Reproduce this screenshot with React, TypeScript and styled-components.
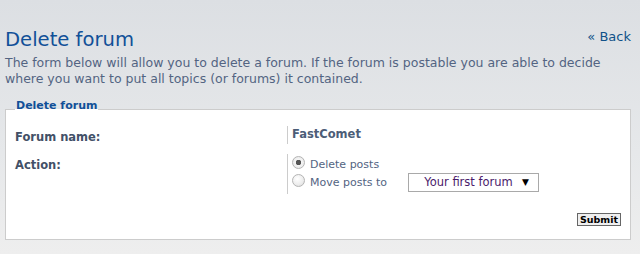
import React from "react";
import styled, { createGlobalStyle } from "styled-components";

const GlobalStyle = createGlobalStyle`
  html, body {
    margin: 0;
    padding: 0;
  }
  body {
    width: 640px;
    height: 254px;
    overflow: hidden;
    background: linear-gradient(to bottom, #dcdfe3 0%, #e6e8ea 60%, #eeeeee 100%);
    font-family: "DejaVu Sans", Verdana, sans-serif;
  }
`;

const Page = styled.div`
  padding: 0 9px 0 5px;
`;

const Header = styled.div`
  display: flex;
  justify-content: space-between;
  align-items: flex-start;
  padding-top: 27px;
`;

const Title = styled.h1`
  margin: 0;
  font-size: 19.6px;
  font-weight: normal;
  line-height: 26px;
  color: #115098;
`;

const BackLink = styled.a`
  margin-top: 2px;
  font-size: 13px;
  color: #105289;
  text-decoration: none;
`;

const Description = styled.p`
  margin: 2px 0 0;
  font-size: 12.5px;
  line-height: 16px;
  color: #536482;
`;

const Fieldset = styled.fieldset`
  margin: 12px 0 0;
  padding: 0 9px 13px 9px;
  background: #ffffff;
  border: 1px solid #cccccc;
  min-width: 0;
`;

const Legend = styled.legend`
  padding: 0 1px 6px;
  margin-left: 0;
  font-size: 11px;
  font-weight: bold;
  line-height: 14px;
  color: #115098;
`;

const Row = styled.div<{ $gap: number }>`
  display: grid;
  grid-template-columns: 272px 1fr;
  margin-top: ${({ $gap }) => $gap}px;
`;

const Label = styled.div`
  font-size: 11.5px;
  font-weight: bold;
  color: #425067;
  padding-top: 4px;
`;

const Value = styled.div<{ $pad?: string }>`
  border-left: 1px solid #cccccc;
  padding: ${({ $pad }) => $pad || "0"};
  padding-left: 4px;
  font-size: 11px;
  color: #333333;
`;

const Strong = styled.div`
  font-size: 11.5px;
  font-weight: bold;
  color: #4c5d77;
  line-height: 17px;
`;

const Option = styled.label`
  display: flex;
  align-items: center;
  height: 18px;
  color: #536482;
`;

const Radio = styled.input`
  appearance: none;
  width: 13px;
  height: 13px;
  margin: 0 5px 0 0;
  border: 1px solid #b4b4b4;
  border-radius: 50%;
  background: radial-gradient(circle at 40% 35%, #ffffff 0%, #ececec 60%, #d6d6d6 100%);
  position: relative;
  top: -2px;

  &:checked {
    background: radial-gradient(circle, #555555 0 2.5px, #f4f4f4 3px, #e4e4e4 100%);
  }
`;

const OptionText = styled.span`
  width: 92px;
`;

const SelectBox = styled.div`
  display: flex;
  align-items: center;
  width: 129px;
  height: 17px;
  border: 1px solid #a9a9a9;
  background: #ffffff;
  margin-left: 6px;
  font-size: 11.5px;
  color: #4b1b6b;
`;

const SelectText = styled.span`
  flex: 1;
  text-align: center;
  padding-left: 6px;
`;

const Arrow = styled.span`
  font-size: 9px;
  color: #000000;
  width: 16px;
`;

const Actions = styled.div`
  display: flex;
  justify-content: flex-end;
  margin-top: 19px;
`;

const Submit = styled.button`
  font-family: "DejaVu Sans", Verdana, sans-serif;
  font-size: 9.5px;
  font-weight: bold;
  color: #000000;
  background: #efefef;
  border: 1px solid #666666;
  padding: 0 2px;
  height: 13px;
  line-height: 11px;
`;

export default function App() {
  return (
    <>
      <GlobalStyle />
      <Page>
        <Header>
          <Title>Delete forum</Title>
          <BackLink href="#">« Back</BackLink>
        </Header>
        <Description>
          The form below will allow you to delete a forum. If the forum is postable you are able to decide
          where you want to put all topics (or forums) it contained.
        </Description>
        <Fieldset>
          <Legend>Delete forum</Legend>
          <Row $gap={7}>
            <Label>Forum name:</Label>
            <Value>
              <Strong>FastComet</Strong>
            </Value>
          </Row>
          <Row $gap={10}>
            <Label>Action:</Label>
            <Value $pad="1px 0 3px">
              <Option>
                <Radio type="radio" name="action" defaultChecked />
                <OptionText>Delete posts</OptionText>
              </Option>
              <Option>
                <Radio type="radio" name="action" />
                <OptionText>Move posts to</OptionText>
                <SelectBox>
                  <SelectText>Your first forum</SelectText>
                  <Arrow>▼</Arrow>
                </SelectBox>
              </Option>
            </Value>
          </Row>
          <Actions>
            <Submit type="button">Submit</Submit>
          </Actions>
        </Fieldset>
      </Page>
    </>
  );
}
